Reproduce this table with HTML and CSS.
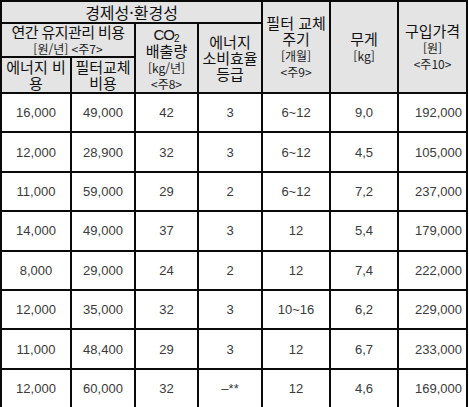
FILE: index.html
```html
<!DOCTYPE html>
<html lang="ko">
<head>
<meta charset="utf-8">
<link rel="stylesheet" href="styles.css">
</head>
<body>
<table class="spec">
  <colgroup>
    <col class="c1"><col class="c2"><col class="c3"><col class="c4"><col class="c5"><col class="c6"><col class="c7">
  </colgroup>
  <thead>
    <tr class="h1">
      <th colspan="4" class="title">경제성·환경성</th>
      <th rowspan="3">필터 교체<br>주기<br><span class="sm">[개월]<br>&lt;주9&gt;</span></th>
      <th rowspan="3">무게<br><span class="sm">[kg]</span></th>
      <th rowspan="3">구입가격<br><span class="sm">[원]<br>&lt;주10&gt;</span></th>
    </tr>
    <tr class="h2">
      <th colspan="2" class="nowrap">연간 유지관리 비용<br><span class="sm">[원/년] &lt;주7&gt;</span></th>
      <th rowspan="2"><span class="co">CO<sub>2</sub></span><br>배출량<br><span class="sm">[kg/년]<br>&lt;주8&gt;</span></th>
      <th rowspan="2">에너지<br>소비효율<br>등급</th>
    </tr>
    <tr class="h3">
      <th>에너지 비<br>용</th>
      <th>필터교체<br>비용</th>
    </tr>
  </thead>
  <tbody>
    <tr><td>16,000</td><td>49,000</td><td>42</td><td>3</td><td>6~12</td><td>9,0</td><td class="price">192,000</td></tr>
    <tr><td>12,000</td><td>28,900</td><td>32</td><td>3</td><td>6~12</td><td>4,5</td><td class="price">105,000</td></tr>
    <tr><td>11,000</td><td>59,000</td><td>29</td><td>2</td><td>6~12</td><td>7,2</td><td class="price">237,000</td></tr>
    <tr><td>14,000</td><td>49,000</td><td>37</td><td>3</td><td>12</td><td>5,4</td><td class="price">179,000</td></tr>
    <tr><td>8,000</td><td>29,000</td><td>24</td><td>2</td><td>12</td><td>7,4</td><td class="price">222,000</td></tr>
    <tr><td>12,000</td><td>35,000</td><td>32</td><td>3</td><td>10~16</td><td>6,2</td><td class="price">229,000</td></tr>
    <tr><td>11,000</td><td>48,400</td><td>29</td><td>3</td><td>12</td><td>6,7</td><td class="price">233,000</td></tr>
    <tr><td>12,000</td><td>60,000</td><td>32</td><td>–**</td><td>12</td><td>4,6</td><td class="price">169,000</td></tr>
  </tbody>
</table>
</body>
</html>
```

FILE: styles.css
```css
html, body {
  margin: 0;
  padding: 0;
  background: #ffffff;
}

.spec {
  border-collapse: collapse;
  table-layout: fixed;
  width: 468px;
}

.c1 { width: 70px; }
.c2 { width: 64px; }
.c3 { width: 63px; }
.c4 { width: 64px; }
.c5 { width: 68px; }
.c6 { width: 68px; }
.c7 { width: 69px; }

.spec th,
.spec td {
  border: 2px solid #0a0a0a;
  padding: 0;
  vertical-align: middle;
  text-align: center;
}

.spec th {
  background: #e4e4e4;
  color: #111111;
  font-family: "Noto Sans CJK KR", "Noto Sans", sans-serif;
  font-weight: normal;
  font-size: 15px;
  line-height: 16px;
}

.spec th.title {
  font-size: 16px;
}

.h1 { height: 22px; }
.h2 { height: 34px; }
.h3 { height: 36px; }

.nowrap {
  white-space: nowrap;
  letter-spacing: -0.6px;
}

.sm {
  font-size: 12px;
  line-height: 13px;
  color: #222222;
  letter-spacing: 0;
}

.co {
  font-family: "Liberation Sans", sans-serif;
  font-size: 15px;
  letter-spacing: -1px;
}

.co sub {
  font-size: 10px;
  vertical-align: -2px;
  line-height: 0;
  letter-spacing: 0;
}

.spec td {
  height: 37.4px;
  font-family: "Liberation Sans", sans-serif;
  font-size: 13px;
  color: #3a3a3a;
  background: #ffffff;
}

.spec td.price {
  text-align: right;
  padding-right: 4px;
}
```
